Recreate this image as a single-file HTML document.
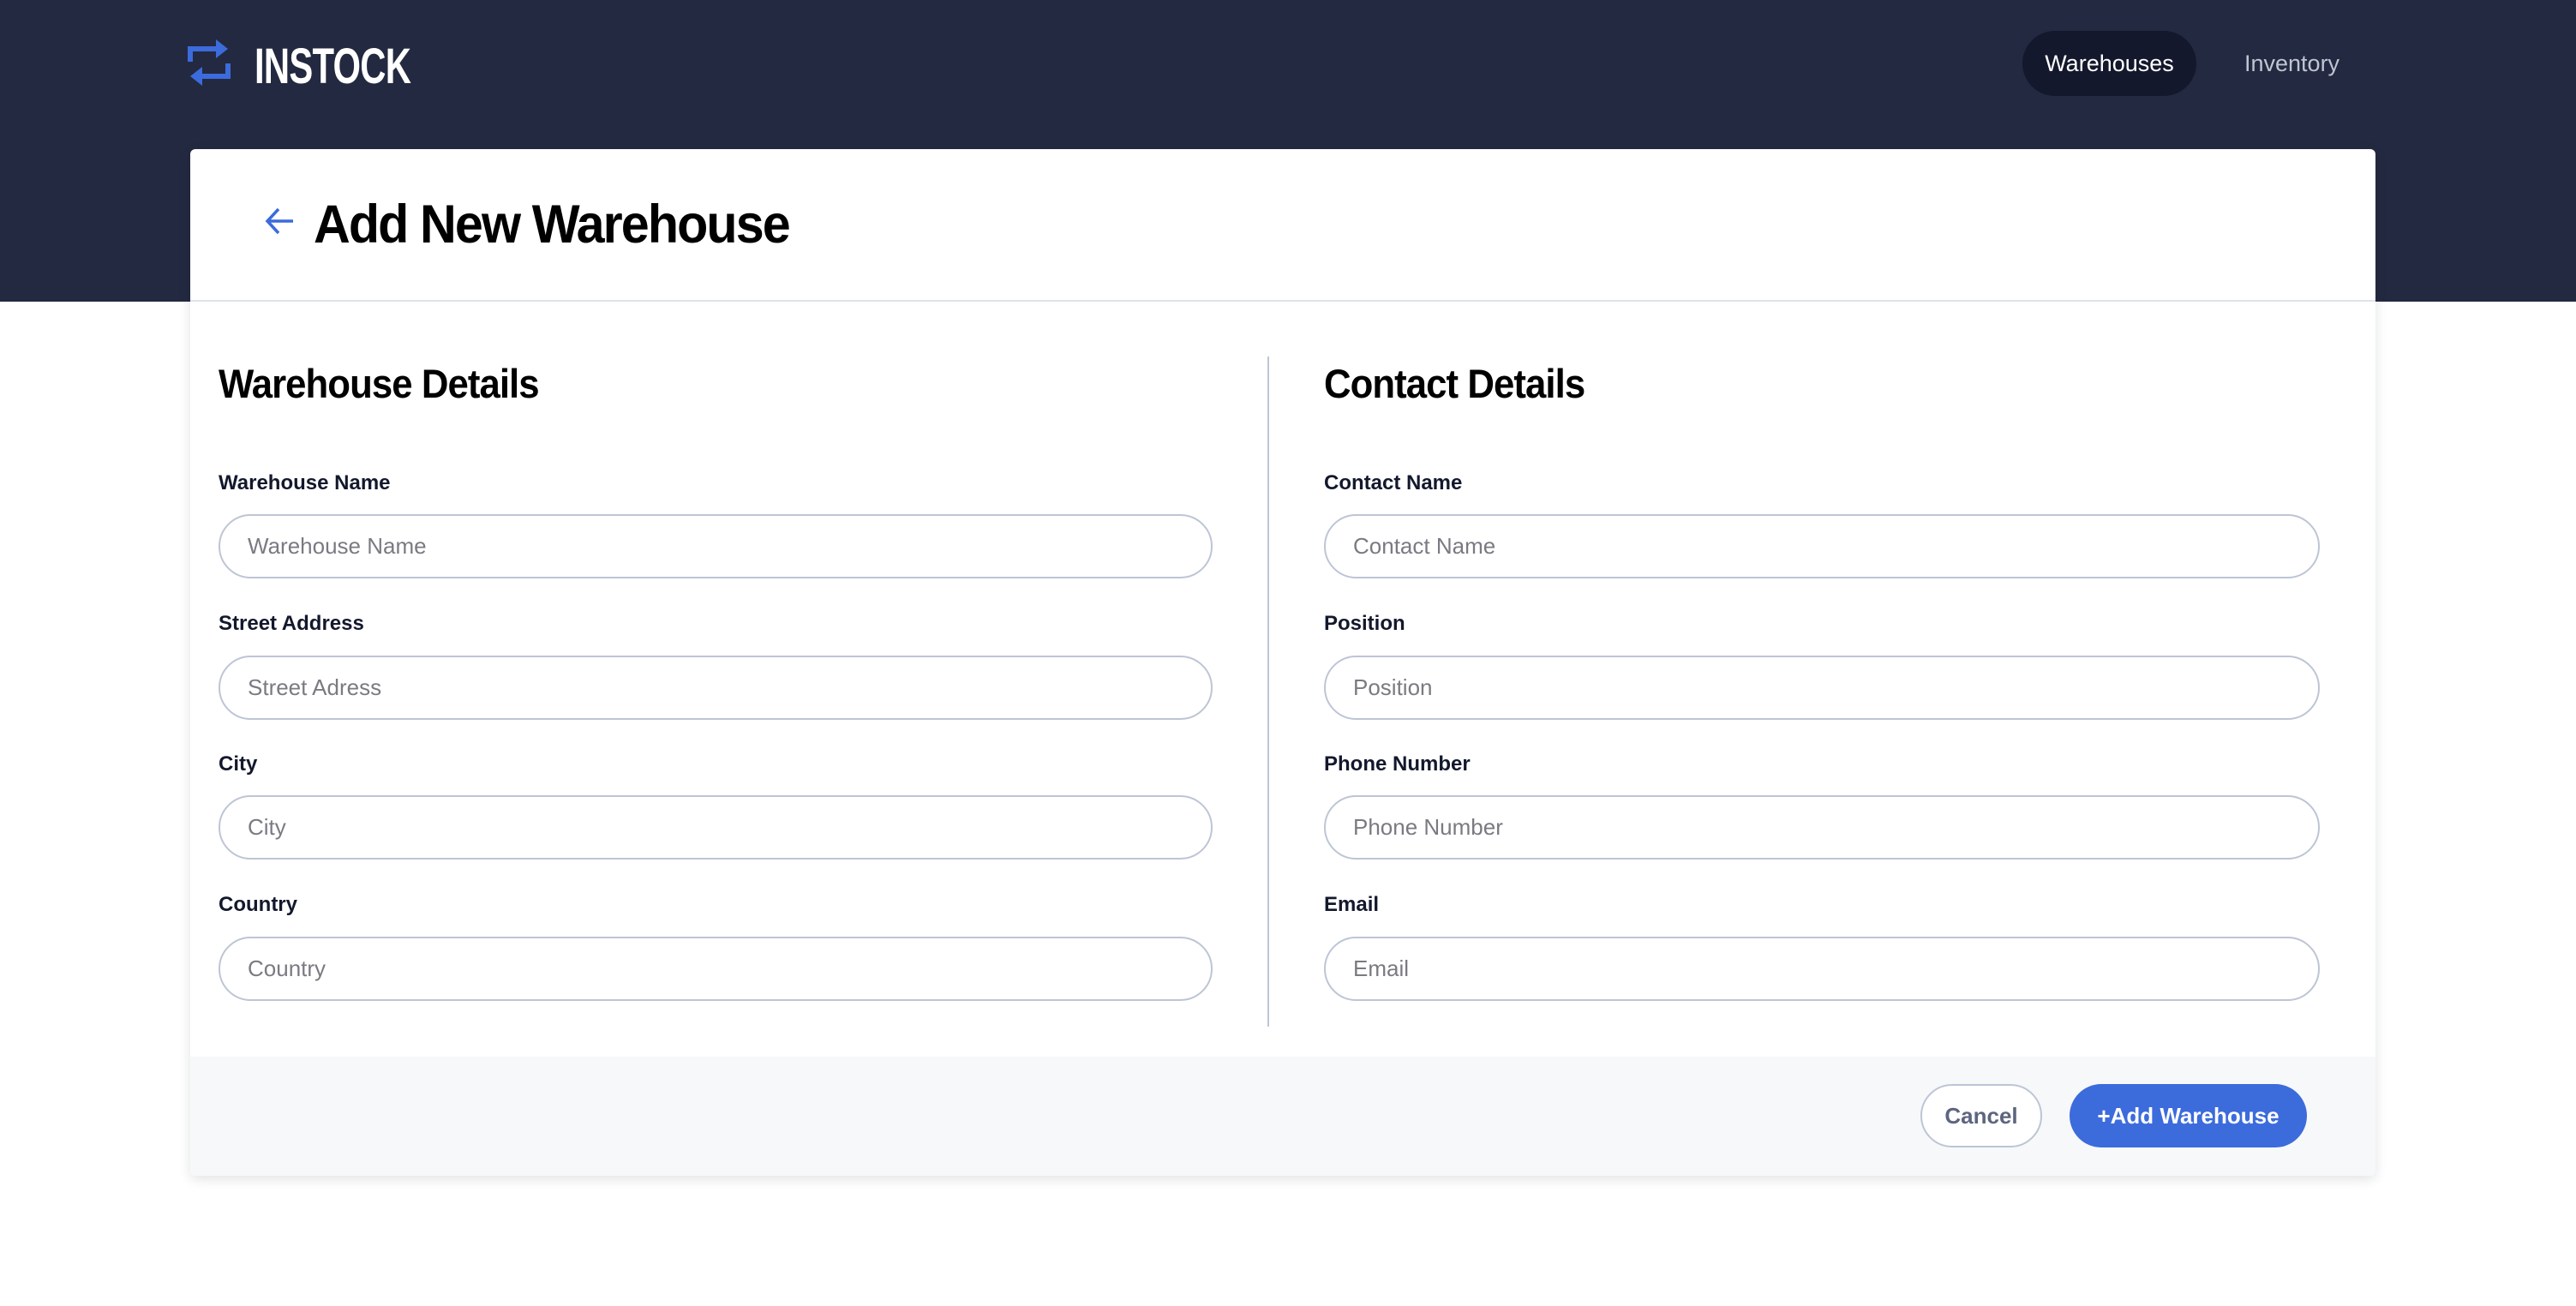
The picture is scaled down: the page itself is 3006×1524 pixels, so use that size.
<!DOCTYPE html>
<html><head><meta charset="utf-8"><style>
*{box-sizing:border-box;margin:0;padding:0}
body{width:3006px;height:1524px;background:#fff;font-family:"Liberation Sans",sans-serif;position:relative;overflow:hidden}
.hdr{position:absolute;left:0;top:0;width:3006px;height:352px;background:#232940}
.abs{position:absolute;white-space:nowrap}
.card{position:absolute;left:222px;top:174px;width:2550px;height:1198px;background:#fff;border-radius:6px;box-shadow:0 4px 14px rgba(19,24,44,.12);overflow:hidden}
.lbl{position:absolute;font-size:24px;font-weight:bold;color:#13182c;white-space:nowrap}
.inp{position:absolute;height:75px;border:2px solid #bdc5d5;border-radius:38px;font-size:26px;color:#7a7a82;padding-left:32px;line-height:71px;white-space:nowrap}
.h2{position:absolute;font-size:47px;font-weight:bold;color:#000;letter-spacing:-1px;white-space:nowrap}
</style></head><body>
<div class="hdr"></div>
<svg class="abs" style="left:214px;top:44px" width="62" height="58" viewBox="0 0 62 58">
<path d="M8 28 V13 H40" fill="none" stroke="#3c6bdc" stroke-width="6"/>
<path d="M38 2 L52 13 L38 24 Z" fill="#3c6bdc"/>
<path d="M52 30 V45 H20" fill="none" stroke="#3c6bdc" stroke-width="6"/>
<path d="M22 34 L8 45 L22 56 Z" fill="#3c6bdc"/>
</svg>
<div class="abs" style="left:297px;top:44px;font-size:58px;font-weight:bold;color:#fff;transform:scaleX(0.72);transform-origin:left top;letter-spacing:-1px">INSTOCK</div>
<div class="abs" style="left:2360px;top:36px;width:203px;height:76px;border-radius:38px;background:#13182c;color:#fff;font-size:27px;line-height:76px;text-align:center">Warehouses</div>
<div class="abs" style="left:2619px;top:36px;height:76px;color:#c0c5d2;font-size:27px;line-height:76px">Inventory</div>
<div class="card">
 <svg class="abs" style="left:86px;top:66px" width="36" height="36" viewBox="0 0 36 36"><path d="M34 18 H4 M17 4 L4 18 L17 32" fill="none" stroke="#3c6bdc" stroke-width="3.5"/></svg>
 <div class="abs" style="left:144px;top:52px;font-size:63px;font-weight:bold;color:#000;letter-spacing:-2px;transform:scaleX(0.94);transform-origin:left top">Add New Warehouse</div>
 <div class="abs" style="left:0;top:176px;width:2550px;height:2px;background:#dfe3eb"></div>
 <div class="abs" style="left:1257px;top:242px;width:2px;height:782px;background:#bdc5d5"></div>
 <div class="h2" style="left:33px;top:246px;transform:scaleX(.93);transform-origin:left top">Warehouse Details</div>
 <div class="h2" style="left:1323px;top:246px;transform:scaleX(.93);transform-origin:left top">Contact Details</div>

 <div class="lbl" style="left:33px;top:376px">Warehouse Name</div>
 <div class="inp" style="left:33px;top:426px;width:1160px">Warehouse Name</div>
 <div class="lbl" style="left:33px;top:540px">Street Address</div>
 <div class="inp" style="left:33px;top:591px;width:1160px">Street Adress</div>
 <div class="lbl" style="left:33px;top:704px">City</div>
 <div class="inp" style="left:33px;top:754px;width:1160px">City</div>
 <div class="lbl" style="left:33px;top:868px">Country</div>
 <div class="inp" style="left:33px;top:919px;width:1160px">Country</div>

 <div class="lbl" style="left:1323px;top:376px">Contact Name</div>
 <div class="inp" style="left:1323px;top:426px;width:1162px">Contact Name</div>
 <div class="lbl" style="left:1323px;top:540px">Position</div>
 <div class="inp" style="left:1323px;top:591px;width:1162px">Position</div>
 <div class="lbl" style="left:1323px;top:704px">Phone Number</div>
 <div class="inp" style="left:1323px;top:754px;width:1162px">Phone Number</div>
 <div class="lbl" style="left:1323px;top:868px">Email</div>
 <div class="inp" style="left:1323px;top:919px;width:1162px">Email</div>

 <div class="abs" style="left:0;top:1059px;width:2550px;height:139px;background:#f7f8fa"></div>
 <div class="abs" style="left:2019px;top:1091px;width:142px;height:74px;border:2px solid #bdc5d5;border-radius:37px;background:#fff;color:#5c667e;font-size:26px;line-height:70px;text-align:center;font-weight:bold">Cancel</div>
 <div class="abs" style="left:2193px;top:1091px;width:277px;height:74px;border-radius:37px;background:#3c6bdc;color:#fff;font-size:26px;line-height:74px;text-align:center;font-weight:bold">+Add Warehouse</div>
</div>
</body></html>
